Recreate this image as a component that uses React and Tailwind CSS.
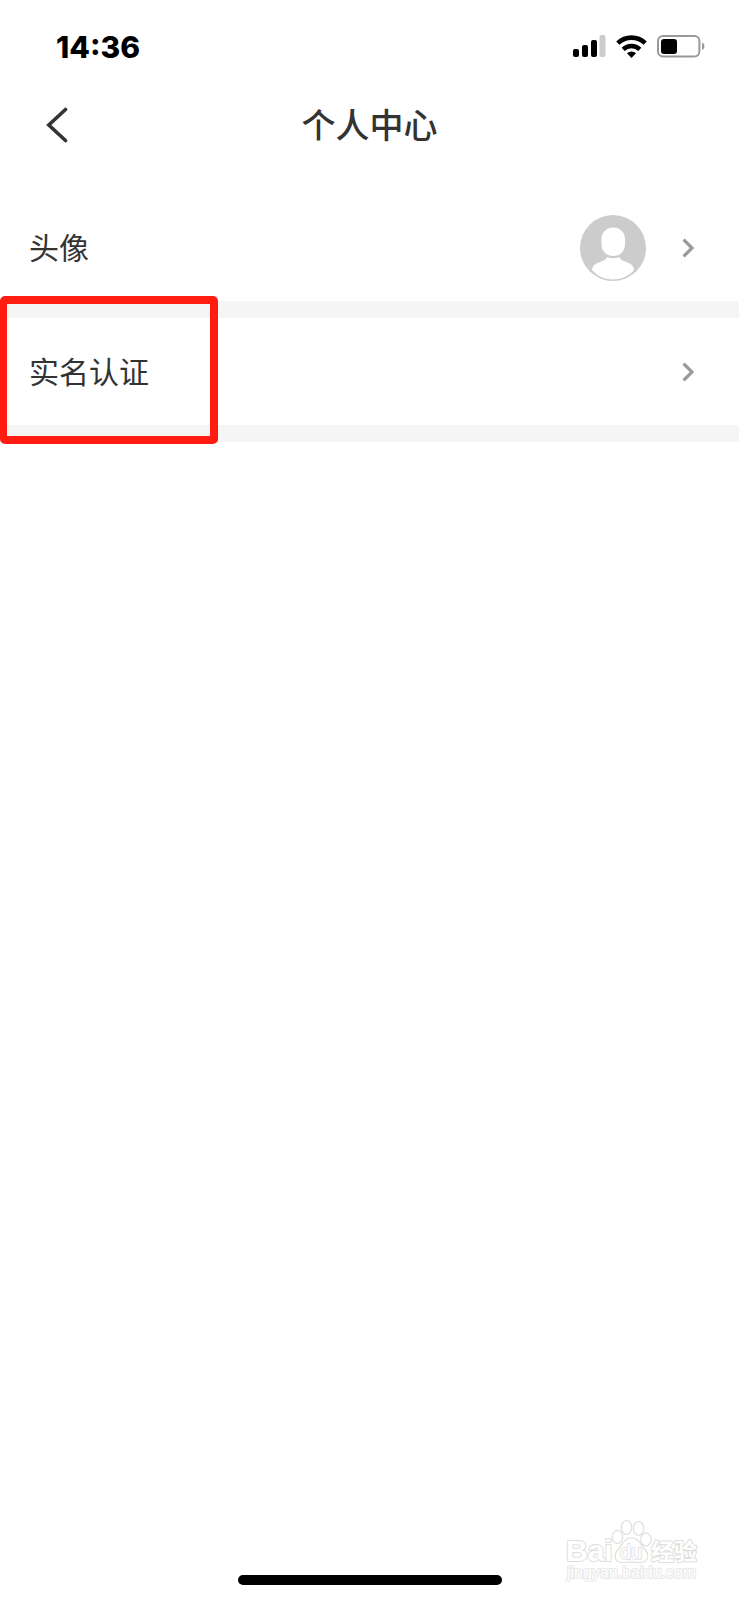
import React from 'react';

const SignalIcon = () => (
  <svg width="33" height="22" viewBox="0 0 33 22" aria-hidden="true">
    <rect x="0" y="14" width="6" height="8" rx="2" fill="#000" />
    <rect x="9" y="10" width="6" height="12" rx="2" fill="#000" />
    <rect x="18" y="5" width="6" height="17" rx="2" fill="#000" />
    <rect x="26.5" y="0" width="6" height="22" rx="2" fill="#ccc" />
  </svg>
);

const WifiIcon = () => (
  <svg width="31" height="23" viewBox="0 0 31 23" fill="none" aria-hidden="true">
    <path d="M1.800 8.200a19.600 19.600 0 0 1 27.400 0" stroke="#000" strokeWidth="4.600" />
    <path d="M7.200 14.400a12 12 0 0 1 16.600 0" stroke="#000" strokeWidth="4.400" />
    <path d="M15.500 23l-4.500-4.800a6.600 6.600 0 0 1 9 0z" fill="#000" />
  </svg>
);

const BatteryIcon = () => (
  <svg width="48" height="23" viewBox="0 0 48 23" fill="none" aria-hidden="true">
    <rect x="1" y="1" width="41.4" height="20.6" rx="5" stroke="#999" strokeWidth="2" />
    <rect x="4" y="4" width="16" height="15" rx="3" fill="#000" />
    <path d="M45 7.500c1.600.6 2.400 2 2.400 3.800s-.8 3.200-2.400 3.800z" fill="#999" />
  </svg>
);

const Chevron = () => (
  <svg width="12" height="20" viewBox="0 0 12 20" fill="none" aria-hidden="true">
    <path d="M1.600 1.600L10 10l-8.400 8.400" stroke="#999" strokeWidth="3.200" />
  </svg>
);

const Avatar = () => (
  <svg width="66" height="66" viewBox="0 0 66 66" aria-hidden="true">
    <circle cx="33" cy="33" r="33" fill="#ccc" />
    <rect x="21.500" y="12.500" width="23.500" height="28.500" rx="11.500" fill="#fff" />
    <path
      d="M27 42c3.800 1.600 8.800 1.600 12.500 0 1.500 6 13.500 3.500 14.700 13C48.500 61.500 41 64.500 33 64.500S17.500 61.500 12 55C13 45.500 25.500 48 27 42z"
      fill="#fff"
    />
  </svg>
);

const Watermark = () => (
  <svg
    className="absolute bottom-3 right-9 font-['Liberation_Sans','Noto_Sans_CJK_SC',sans-serif]"
    width="138"
    height="72"
    viewBox="0 0 138 72"
    fill="#fff"
    stroke="#dedede"
    strokeWidth="1.200"
  >
    <g strokeWidth="2" paintOrder="stroke" strokeLinejoin="round">
      <text x="1" y="45" fontSize="30" fontWeight="700">Bai</text>
      <text x="86" y="44" fontSize="23" fontWeight="700">经验</text>
      <text x="2" y="62" fontSize="16" stroke="#e8e8e8">jingyan.baidu.com</text>
    </g>
    <ellipse cx="52.500" cy="21" rx="5.200" ry="6.600" />
    <ellipse cx="61.500" cy="11.500" rx="5.200" ry="7" />
    <ellipse cx="73.500" cy="12.500" rx="5.200" ry="7" />
    <ellipse cx="81" cy="23.500" rx="5.200" ry="6.600" />
    <path d="M66.500 22c7 0 9 6.500 13 11 5.500 5.500 4 13-3.500 13.500-3.500.2-6-.6-9.500-.6s-6 .8-9.500.6c-7.500-.5-9-8-3.500-13.500 4-4.500 6-11 13-11z" />
    <text x="55" y="43" fontSize="20" stroke="#dedede" strokeWidth="1.600" paintOrder="stroke">du</text>
  </svg>
);

const StatusBar = () => (
  <div className="flex h-[92px] items-center justify-between pl-14 pr-[34px]">
    <span className="pt-[2px] font-['Inter',sans-serif] text-[30px] font-extrabold leading-9 text-black">
      14:36
    </span>
    <div className="flex items-center gap-[10px]">
      <SignalIcon />
      <WifiIcon />
      <BatteryIcon />
    </div>
  </div>
);

const Header = () => (
  <header className="grid h-[66px] grid-cols-[1fr_auto_1fr] items-center">
    <button type="button" aria-label="返回" className="justify-self-start pl-[46px]">
      <svg width="22" height="36" viewBox="0 0 22 36" fill="none" aria-hidden="true">
        <path d="M19.500 2.500L2.800 18l16.700 15.500" stroke="#333" strokeWidth="3.600" strokeLinecap="round" />
      </svg>
    </button>
    <h1 className="pb-[2px] text-[34px] font-medium leading-10">个人中心</h1>
  </header>
);

const Row = ({ label, children }) => (
  <a
    href="#"
    className="flex h-[107px] items-center justify-between pl-[29px] pr-[45px] text-[30px] leading-10"
  >
    <span className="pb-[3px]">{label}</span>
    <span className="flex items-center gap-9">
      {children}
      <Chevron />
    </span>
  </a>
);

const Divider = () => <div className="h-[17px] bg-[#f5f5f5]" />;

const App = () => {
  return (
    <div className="relative flex min-h-screen flex-col bg-white font-['Noto_Sans_CJK_SC',sans-serif] text-[#333]">
      <StatusBar />
      <Header />

      <main className="mt-9 flex-1">
        <Row label="头像">
          <Avatar />
        </Row>
        <Divider />
        <div className="relative">
          <Row label="实名认证" />
          {/* Highlight around the verification entry */}
          <div className="pointer-events-none absolute -top-[22px] left-0 h-[148px] w-[218px] rounded-[5px] border-8 border-l-[7px] border-[#ff1d12]" />
        </div>
        <Divider />
      </main>

      <Watermark />
      <div className="mx-auto mb-[15px] h-[10px] w-[264px] rounded-full bg-black" />
    </div>
  );
};

export default App;
